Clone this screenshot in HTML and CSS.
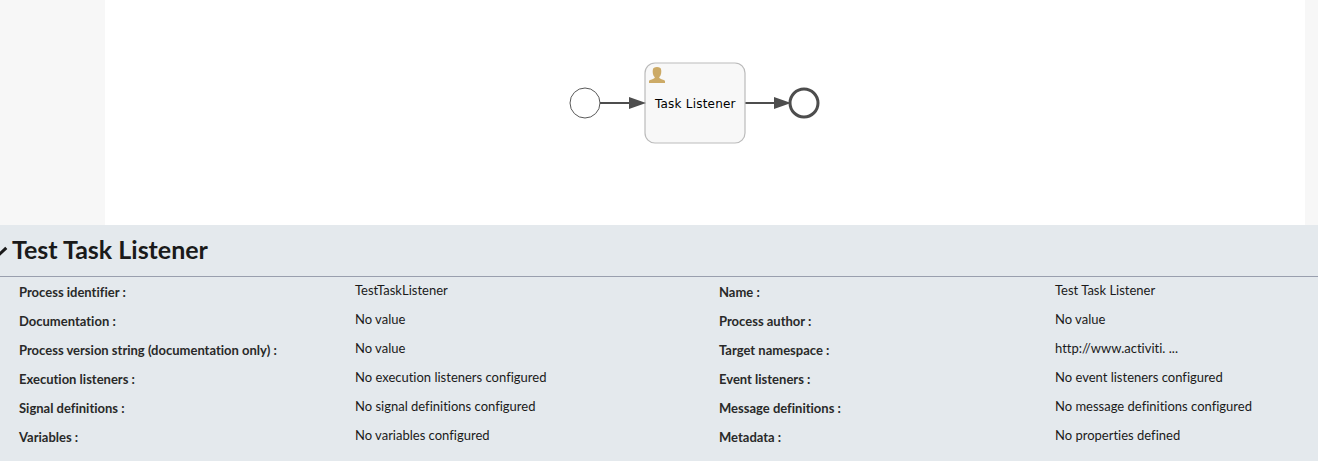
FILE: index.html
```html
<!DOCTYPE html>
<html lang="en"><head><meta charset="utf-8"><title>Test Task Listener</title><link rel="stylesheet" href="styles.css"></head>
<body>
<main class="canvas-area"><div class="canvas">
<svg class="diagram" width="1200" height="225" viewBox="105 0 1200 225" role="img" aria-label="Process diagram">
<circle class="start" cx="585" cy="103" r="15"/>
<path class="flow" d="M600 103H634M745 103H779"/>
<rect class="task" x="645" y="63" width="100" height="80" rx="10"/>
<path class="arrow" d="M629 97L646 103L629 109ZM774 97L791 103L774 109Z"/>
<path class="user" d="M649 83V81C649 79.500 654.800 79.500 654.800 77.200C652.800 75.500 652.500 72 652.800 70C653 67.800 654.500 67 657 67S661 67.800 661.200 70C661.500 72 661.200 75.500 659.200 77.200C659.200 79.500 665 79.500 665 81V83Z"/>
<text class="label" x="655" y="108" textLength="80.500">Task Listener</text>
<circle class="end" cx="804" cy="103" r="14"/>
</svg></div></main>
<section class="properties">
<header class="heading"><svg class="chevron" width="8" height="12" viewBox="0 0 8 12"><path d="M-5 3L0 8.800L6.300 2.800"/></svg><h1>Test Task Listener</h1></header>
<div class="columns">
<dl class="list"><dt>Process identifier :</dt><dd>TestTaskListener</dd><dt>Documentation :</dt><dd>No value</dd><dt>Process version string (documentation only) :</dt><dd>No value</dd><dt>Execution listeners :</dt><dd>No execution listeners configured</dd><dt>Signal definitions :</dt><dd>No signal definitions configured</dd><dt>Variables :</dt><dd>No variables configured</dd></dl>
<dl class="list"><dt>Name :</dt><dd>Test Task Listener</dd><dt>Process author :</dt><dd>No value</dd><dt>Target namespace :</dt><dd>http://www.activiti. ...</dd><dt>Event listeners :</dt><dd>No event listeners configured</dd><dt>Message definitions :</dt><dd>No message definitions configured</dd><dt>Metadata :</dt><dd>No properties defined</dd></dl>
</div></section>
</body></html>
```
FILE: styles.css
```css
* { box-sizing: border-box; }
body { margin: 0; height: 461px; overflow: hidden; background: #e4e9ed; font-family: Lato, sans-serif; color: #1a1a1a; }
.canvas-area { height: 225px; padding: 0 13px 0 105px; background: #f7f7f7; }
.canvas { height: 225px; background: #fff; }
.diagram { display: block; }
.start { fill: #fff; stroke: #585858; stroke-width: 1; }
.end { fill: #fff; stroke: #4d4d4d; stroke-width: 3; }
.flow { fill: none; stroke: #4d4d4d; stroke-width: 2; }
.arrow { fill: #4d4d4d; }
.task { fill: #f8f8f8; stroke: #bbb; stroke-width: 1.2; }
.user { fill: #ccaa66; }
.label { font-family: "DejaVu Sans", sans-serif; font-size: 12px; fill: #000; }
.properties { height: 236px; background: #e4e9ed; }
.heading { height: 52px; display: flex; align-items: center; gap: 4px; padding-bottom: 3px; border-bottom: 1px solid #999fae; }
.chevron { fill: none; stroke: #1a1a1a; stroke-width: 3; margin-top: 4px; }
h1 { margin: 0; font-size: 25px; line-height: 30px; font-weight: 700; }
.columns { display: grid; grid-template-columns: 700px 1fr; padding: 0 0 0 19px; }
.list { margin: 0; display: grid; grid-template-columns: 336px 1fr; grid-auto-rows: 29px; font-size: 13px; line-height: 18px; font-variant-ligatures: none; }
dt { padding-top: 6px; font-weight: 700; white-space: nowrap; color: #292929; }
dd { margin: 0; padding-top: 4px; white-space: nowrap; }
```
